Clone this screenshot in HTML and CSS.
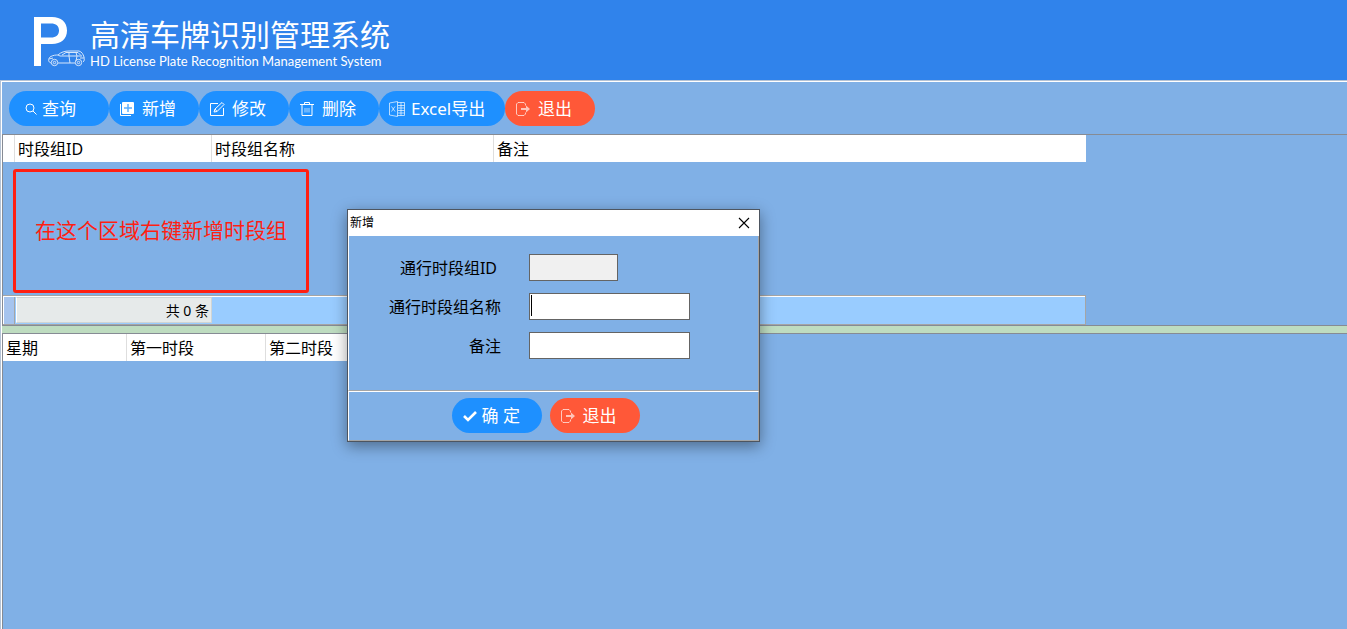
FILE: index.html
```html
<!DOCTYPE html>
<html lang="zh-CN">
<head>
<meta charset="utf-8">
<title>高清车牌识别管理系统</title>
<link rel="stylesheet" href="styles.css">
</head>
<body>
<header class="banner">
  <svg class="logo" viewBox="0 0 54 52" aria-hidden="true">
    <path class="logo-p" fill-rule="evenodd" d="M1 1H19C28 1 34 6 34 14.500C34 23 28 28 19 28H8V50H1ZM8 7.500V21.500H18C23 21.500 26 19 26 14.500C26 10 23 7.500 18 7.500Z"/>
    <g class="logo-car">
      <path d="M18 47C15 46 15 43 17 41C20 39 23 39 25 39C28 36 32 35 36 35H46C49 36 50 38 51 41C51.500 43 51.500 45 50 46"/>
      <path d="M25 39L27 40H49M29 39L33 36.500H45L48 39.500M36 36.500V40L37 47M43 36.500L44 40L43 45M25 47H42M16 43L20 42M47 42H51"/>
      <circle cx="21.500" cy="46.500" r="3.200"/><circle cx="21.500" cy="46.500" r="1.200"/>
      <circle cx="45.500" cy="46.500" r="3.200"/><circle cx="45.500" cy="46.500" r="1.200"/>
    </g>
  </svg>
  <div class="brand">
    <h1 class="brand-name">高清车牌识别管理系统</h1>
    <p class="brand-sub">HD License Plate Recognition Management System</p>
  </div>
</header>
<main class="workspace">
  <nav class="toolbar">
    <button class="btn btn-query" type="button"><svg class="icon" viewBox="0 0 16 16"><circle cx="7" cy="7" r="4"/><path d="M10 10L13.500 13.500"/></svg>查询</button>
    <button class="btn" type="button"><svg class="icon" viewBox="0 0 16 16"><path d="M1.500 3V14.500H12"/><rect class="solid" x="3" y="1" width="12" height="12" rx="1"/><path class="plus" d="M9 3V11M5 7H13"/></svg>新增</button>
    <button class="btn" type="button"><svg class="icon" viewBox="0 0 16 16"><path d="M9 2.500H1.500V14.500H14.500V7M5 11L6 8L13 1.500L15 3.500L8 10.500ZM6 8L8 10.500"/></svg>修改</button>
    <button class="btn" type="button"><svg class="icon" viewBox="0 0 16 16"><path d="M1 3.500H15M5.500 3.500V1.500H10.500V3.500M3 3.500V14.500H13V3.500"/><path class="thin" d="M6 7V11.500M8 7V11.500M10 7V11.500"/></svg>删除</button>
    <button class="btn btn-excel" type="button"><svg class="icon icon-wide" viewBox="0 0 18 16"><path class="thin" d="M9.500 0.500L1.500 2V14L9.500 15.500ZM3.500 5.500L7 10.500M7 5.500L3.500 10.500M9.500 1.500H16.500V14.500H9.500M13 1.500V14.500M10 4.500H16.500M10 7H16.500M10 9.500H16.500M10 12H16.500"/></svg>Excel导出</button>
    <button class="btn btn-exit" type="button"><svg class="icon" viewBox="0 0 16 16"><path class="thin" d="M10.500 4.500V3L9 1.500H3L1.500 3V13L3 14.500H9L10.500 13V11.500"/><path class="arrow" d="M6 7H11V4.500L15 8L11 11.500V9H6Z"/></svg>退出</button>
  </nav>

  <section class="groups">
    <table class="grid">
      <colgroup><col class="c-mark"><col class="c-id"><col class="c-name"><col class="c-note"></colgroup>
      <thead><tr><td></td><th scope="col">时段组ID</th><th scope="col">时段组名称</th><th scope="col">备注</th></tr></thead>
    </table>
    <p class="hint">在这个区域右键新增时段组</p>
    <div class="summary">
      <span class="summary-mark"></span>
      <span class="summary-count">共 0 条</span>
    </div>
  </section>
  <div class="splitter"></div>
  <section class="periods">
    <table class="grid grid-periods">
      <colgroup><col class="c-day"><col class="c-period"><col class="c-period"></colgroup>
      <thead><tr><th scope="col">星期</th><th scope="col">第一时段</th><th scope="col">第二时段</th></tr></thead>
    </table>
  </section>
</main>

<form class="dialog" role="dialog" aria-labelledby="dialog-title">
  <div class="dialog-head">
    <h2 class="dialog-title" id="dialog-title">新增</h2>
    <button class="close" type="button" aria-label="关闭"><svg class="close-icon" viewBox="0 0 12 12"><path d="M1 1L11 11M11 1L1 11"/></svg></button>
  </div>
  <div class="fields">
    <label class="label label-id" for="group-id">通行时段组ID</label>
    <input class="field field-id" id="group-id" type="text" disabled>
    <label class="label" for="group-name">通行时段组名称</label>
    <span class="caret-field"><input class="field" id="group-name" type="text"><span class="caret"></span></span>
    <label class="label" for="group-note">备注</label>
    <input class="field" id="group-note" type="text">
  </div>
  <div class="actions">
    <button class="btn btn-ok" type="submit"><svg class="icon" viewBox="0 0 16 16"><path class="check" d="M2 8L6 12L14 4"/></svg>确 定</button>
    <button class="btn btn-exit" type="button"><svg class="icon" viewBox="0 0 16 16"><path class="thin" d="M10.500 4.500V3L9 1.500H3L1.500 3V13L3 14.500H9L10.500 13V11.500"/><path class="arrow" d="M6 7H11V4.500L15 8L11 11.500V9H6Z"/></svg>退出</button>
  </div>
</form>
</body>
</html>
```

FILE: styles.css
```css
* { box-sizing: border-box; }

body {
  margin: 0;
  min-height: 100vh;
  display: flex;
  flex-direction: column;
  background: #80b0e6;
  color: #000;
  font: 16px/24px "Noto Sans", "Noto Sans CJK SC", sans-serif;
}

h1, h2, p { margin: 0; font-weight: 400; }

.banner {
  display: flex;
  height: 80px;
  padding: 16px 0 0 33px;
  gap: 3px;
  background: #3083eb;
  color: #fff;
}
.logo { width: 54px; height: 52px; }
.logo-p { fill: #fff; }
.logo-car { fill: none; stroke: #d6e6fb; stroke-width: 1; }
.brand-name { font-size: 30px; line-height: 38px; }
.brand-sub {
  font-family: Lato, sans-serif;
  font-size: 13px;
  line-height: 14px;
  white-space: nowrap;
}

.workspace {
  flex: 1;
  display: flex;
  flex-direction: column;
  border-top: 1px solid #b4c3d6;
  border-left: 1px solid #b4c3d6;
  box-shadow: inset 1px 1px #fff;
  padding: 1px 0 0 1px;
}

.toolbar {
  display: flex;
  padding: 9px 7px 8px;
  border-bottom: 1px solid #868b94;
}
.btn {
  display: flex;
  align-items: center;
  gap: 7px;
  width: 90px;
  height: 35px;
  padding: 0 0 0 10px;
  border: 0;
  border-radius: 18px;
  background: #1e90ff;
  color: #fff;
  font: 17px/24px "Noto Sans", "Noto Sans CJK SC", sans-serif;
  white-space: nowrap;
}
.btn-query { width: 100px; padding-left: 14px; gap: 3px; }
.btn-excel { width: 126px; padding-left: 9px; gap: 5px; }
.btn-exit { background: #ff5838; }
.icon {
  flex: none;
  width: 16px;
  height: 16px;
  fill: none;
  stroke: #fff;
  stroke-width: 1;
}
.icon-wide { width: 18px; }
.icon .thin { stroke-width: 0.8; opacity: 0.85; }
.icon .solid { fill: #fff; stroke: none; }
.icon .plus { stroke: #5aaeff; stroke-width: 1.5; }
.icon .arrow { fill: #fff; stroke: none; opacity: 0.65; }
.icon .check { stroke-width: 2.6; }

.groups {
  position: relative;
  display: flex;
  flex-direction: column;
  height: 190px;
  border-left: 1px solid #868b94;
}
.grid {
  width: 1083px;
  border-collapse: separate;
  border-spacing: 0;
  table-layout: fixed;
  background: #fff;
}
.grid th, .grid td {
  height: 27px;
  padding: 0 0 0 3px;
  border-right: 1px solid #dedede;
  font-weight: 400;
  line-height: 26px;
  text-align: left;
}
.grid th:last-child { border-right: 0; }
.c-mark { width: 12px; }
.c-id { width: 197px; }
.c-name { width: 282px; }
.c-day { width: 124px; }
.c-period { width: 139px; }

.hint {
  position: absolute;
  left: 10px;
  top: 34px;
  width: 296px;
  height: 124px;
  border: 3px solid #ff1f12;
  border-radius: 3px;
  color: #ff1f12;
  font-size: 21px;
  line-height: 116px;
  text-align: center;
}

.summary {
  display: flex;
  width: 1083px;
  height: 30px;
  margin-top: auto;
  border: 1px solid #a5a5a5;
  border-left: 0;
  box-shadow: inset 0 1px #fff;
  background: #99ccff;
}
.summary-mark {
  width: 12px;
  margin-top: 1px;
  border-right: 1px solid #a5a5a5;
  border-left: 1px solid #fff;
  background: #a6c4ee;
}
.summary-count {
  width: 196px;
  margin: 1px 0 1px 1px;
  border: 1px solid #cfd4d4;
  border-left-color: #fff;
  background: #e6eaea;
  padding-right: 2px;
  font-size: 14px;
  line-height: 26px;
  text-align: right;
}

.splitter {
  height: 9px;
  border-top: 1px solid #868b94;
  border-bottom: 1px solid #868b94;
  background: #bedcc0;
}
.periods { flex: 1; border-left: 1px solid #868b94; }
.grid-periods { width: 402px; }

.dialog {
  position: absolute;
  left: 347px;
  top: 209px;
  width: 413px;
  border: 1px solid #4d5560;
  background: #80b0e6;
  box-shadow: 0 4px 14px rgba(0, 0, 0, 0.4);
}
.dialog-head {
  display: flex;
  justify-content: space-between;
  align-items: center;
  height: 26px;
  padding: 0 9px 0 2px;
  background: #fff;
}
.dialog-title { font-size: 12px; line-height: 24px; }
.close { display: flex; padding: 0; border: 0; background: none; }
.close-icon { width: 12px; height: 12px; fill: none; stroke: #000; stroke-width: 1.1; }

.fields {
  display: grid;
  grid-template-columns: 152px 161px;
  column-gap: 28px;
  row-gap: 12px;
  align-items: center;
  align-content: start;
  height: 155px;
  padding-top: 18px;
  border-left: 1px solid #fff;
  border-right: 1px solid #a5a5a5;
  border-bottom: 1px solid #a5a5a5;
}
.label { text-align: right; }
.label-id { padding-right: 4px; }
.field {
  display: block;
  width: 161px;
  height: 27px;
  padding: 0 3px;
  border: 1px solid #646464;
  border-radius: 0;
  background: #fff;
  font: inherit;
}
.field-id { width: 89px; background: #f0f0f0; }
.caret-field { position: relative; }
.caret { position: absolute; left: 2px; top: 2px; width: 1px; height: 21px; background: #000; }

.actions {
  display: flex;
  justify-content: center;
  gap: 8px;
  padding: 6px 16px 7px 0;
  border: 1px solid #a5a5a5;
  border-top-color: #fff;
  border-left-color: #fff;
}
.btn-ok { gap: 4px; }
```
